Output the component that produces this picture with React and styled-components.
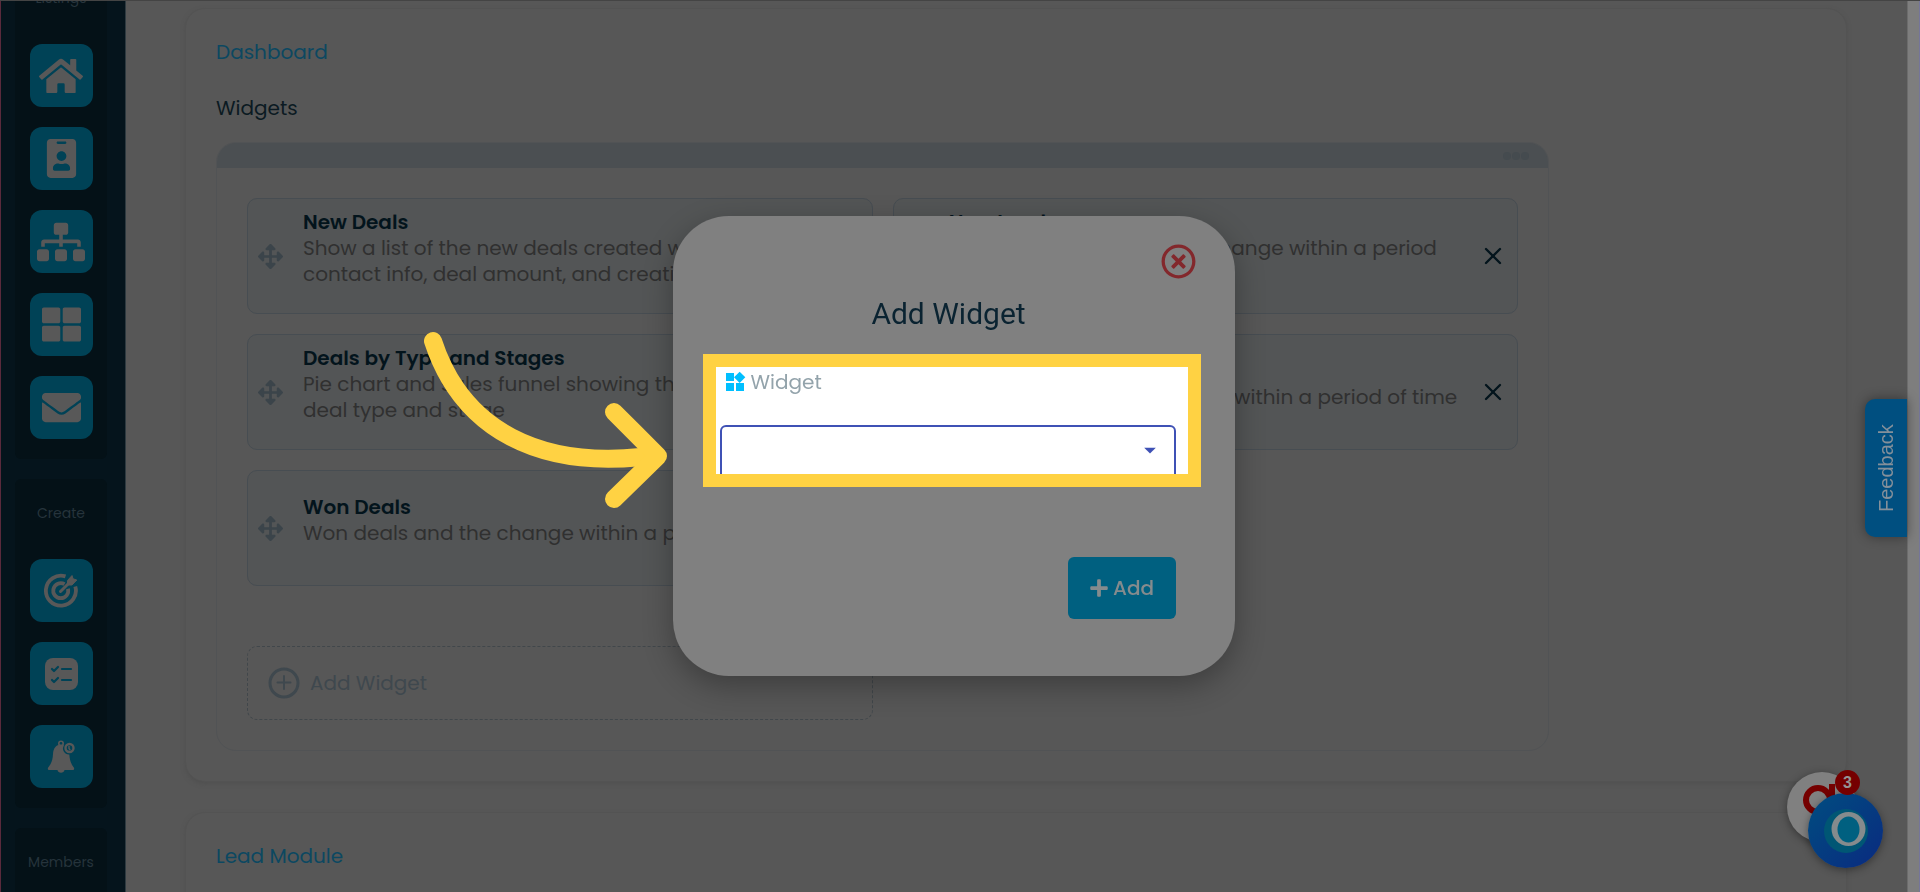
import React, { useState } from 'react'
import styled, { createGlobalStyle } from 'styled-components'
import {
  FaHome,
  FaIdBadge,
  FaSitemap,
  FaThLarge,
  FaEnvelope,
  FaArrowsAlt,
  FaRegTimesCircle,
  FaPlus,
} from 'react-icons/fa'
import { MdWidgets, MdArrowDropDown } from 'react-icons/md'
import { X } from 'lucide-react'

const GlobalStyle = createGlobalStyle`
  * {
    box-sizing: border-box;
  }
  body {
    margin: 0;
    overflow: hidden;
    background: #575757;
    font-family: Poppins, Inter, 'Noto Sans', sans-serif;
    font-size: 20px;
    line-height: 26px;
  }
  button, select {
    font: inherit;
  }
`

const TargetIcon = () => (
  <svg width="36" height="36" viewBox="0 0 36 36" fill="none" stroke="currentColor">
    <path d="M22.5 3.4A15 15 0 1 0 32.3 13.5" strokeWidth="3.8" />
    <path d="M21.5 11.2A7.5 7.5 0 1 0 25 15.8" strokeWidth="3.8" />
    <path d="M17.5 18.5L27 9" strokeWidth="3" strokeLinecap="round" />
    <path
      d="M24.5 7.5L29 2.5L30 5.8L33.8 7L29 12H24.5Z"
      fill="currentColor"
      strokeWidth="1"
      strokeLinejoin="round"
    />
  </svg>
)

const TasksIcon = () => (
  <svg width="34" height="34" viewBox="0 0 34 34" fill="none">
    <rect x="1" y="1" width="33" height="32" rx="8" fill="currentColor" />
    <g stroke="#004256" strokeWidth="2.2" strokeLinecap="round" strokeLinejoin="round">
      <path d="M8 12l2 2 4-4M18 12h9M8 23l2 2 4-4M18 23h9" />
    </g>
  </svg>
)

const ReminderIcon = () => (
  <svg width="28" height="34" viewBox="0 0 28 34" fill="currentColor">
    <circle cx="14" cy="3.5" r="2.2" fill="none" stroke="currentColor" strokeWidth="1.6" />
    <path d="M14 4.5C9 4.5 6.3 8.5 6 14C5.7 20 4.5 23.5 1.2 27.5C.4 28.8 1 30 2.4 30H10.5C11 33.6 17 33.6 17.5 30H25.6C27 30 27.6 28.8 26.8 27.5C24 24 22.8 20 22.3 14.5A6 6 0 0 1 17 5.2Z" />
    <circle cx="22.5" cy="8" r="4" fill="none" stroke="currentColor" strokeWidth="2.4" />
    <path d="M22 6v2.5l1.2 1.5" fill="none" stroke="currentColor" strokeWidth="1.4" />
  </svg>
)

const AddCircleIcon = () => (
  <svg width="32" height="32" viewBox="0 0 32 32" fill="none" stroke="currentColor">
    <circle cx="16" cy="16" r="14" strokeWidth="3" />
    <path d="M16 9v13M9.5 15.5h13" strokeWidth="2" strokeLinecap="round" />
  </svg>
)

const menu = [
  {
    label: 'Listings',
    items: [
      { name: 'Home', icon: <FaHome size={44} /> },
      { name: 'Contacts', icon: <FaIdBadge size={39} /> },
      { name: 'Teams', icon: <FaSitemap size={48} /> },
      { name: 'Boards', icon: <FaThLarge size={39} /> },
      { name: 'Mail', icon: <FaEnvelope size={39} /> },
    ],
  },
  {
    label: 'Create',
    items: [
      { name: 'Goal', icon: <TargetIcon /> },
      { name: 'Task', icon: <TasksIcon /> },
      { name: 'Reminder', icon: <ReminderIcon /> },
    ],
  },
  { label: 'Members', items: [] },
]

const widgets = [
  {
    title: 'New Deals',
    text: 'Show a list of the new deals created with the contact info, deal amount, and creation date',
  },
  {
    title: 'New Leads',
    text: 'Number of Leads and the change within a period of time',
  },
  {
    title: 'Deals by Type and Stages',
    text: 'Pie chart and sales funnel showing the deals by deal type and stage',
  },
  {
    title: 'Open Deals',
    text: 'Open deals and the change within a period of time',
  },
  {
    title: 'Won Deals',
    text: 'Won deals and the change within a period of time',
  },
]

const Sidebar = () => (
  <SideWrapper>
    {menu.map(({ label, items }) => (
      <Group key={label}>
        <GroupLabel>{label}</GroupLabel>
        {items.map(({ name, icon }) => (
          <Tile key={name} aria-label={name}>
            {icon}
          </Tile>
        ))}
      </Group>
    ))}
  </SideWrapper>
)

const Widget = ({ title, text }) => (
  <WidgetCard>
    <MoveIcon />
    <WidgetBody>
      <WidgetTitle>{title}</WidgetTitle>
      <div>{text}</div>
    </WidgetBody>
    <RemoveButton aria-label={`Remove ${title}`}>
      <X size={28} />
    </RemoveButton>
  </WidgetCard>
)

const AddWidgetModal = () => {
  const [widget, setWidget] = useState('')
  return (
    <Backdrop>
      <Modal role="dialog" aria-labelledby="modal-title">
        <CloseButton aria-label="Close">
          <FaRegTimesCircle size={35} />
        </CloseButton>
        <ModalTitle id="modal-title">Add Widget</ModalTitle>
        <Highlight>
          <Label htmlFor="widget">
            <MdWidgets size={24} />
            Widget
          </Label>
          <SelectWrapper>
            <Select id="widget" value={widget} onChange={e => setWidget(e.target.value)}>
              <option value="" />
            </Select>
            <MdArrowDropDown size={28} />
          </SelectWrapper>
        </Highlight>
        <AddButton>
          <FaPlus size={20} />
          Add
        </AddButton>
        <Arrow viewBox="423 331 250 180" aria-hidden="true">
          <path d="M433 341C462 430 540 470 650 456" />
          <path d="M614 412L658 456L614 499" />
        </Arrow>
      </Modal>
    </Backdrop>
  )
}

const Chat = () => (
  <ChatWrapper>
    <Assistant aria-label="Messages">
      <svg width="70" height="70" viewBox="0 0 70 70" fill="none" stroke="#750000">
        <circle cx="31" cy="28" r="12" strokeWidth="6" />
        <path d="M45 12v32" strokeWidth="6" />
      </svg>
    </Assistant>
    <Launcher aria-label="Open chat">
      <svg width="75" height="75" viewBox="0 0 75 75">
        <circle cx="38" cy="38" r="22" fill="#005674" />
        <circle cx="40.5" cy="36" r="17" fill="#858b8d" />
        <ellipse cx="40.5" cy="36.5" rx="11" ry="13" fill="#006080" />
      </svg>
    </Launcher>
    <Badge>3</Badge>
  </ChatWrapper>
)

const App = () => (
  <Page>
    <GlobalStyle />
    <Sidebar />
    <Main>
      <Card>
        <CardTitle>Dashboard</CardTitle>
        <SubTitle>Widgets</SubTitle>
        <Panel>
          <PanelHeader>
            <Dot />
            <Dot />
            <Dot />
          </PanelHeader>
          <Grid>
            {widgets.map(item => (
              <Widget key={item.title} {...item} />
            ))}
          </Grid>
          <Grid>
            <AddWidget>
              <AddCircleIcon />
              Add Widget
            </AddWidget>
          </Grid>
        </Panel>
      </Card>
      <Card>
        <CardTitle>Lead Module</CardTitle>
      </Card>
    </Main>
    <ScrollTrack />
    <Feedback>Feedback</Feedback>
    <AddWidgetModal />
    <Chat />
  </Page>
)

const Page = styled.div`
  display: flex;
  height: 100vh;
  overflow: hidden;
  border-top: 1px solid #444;
`

const SideWrapper = styled.nav`
  flex: 0 0 126px;
  display: flex;
  flex-direction: column;
  align-items: center;
  gap: 20px;
  margin-top: -37px;
  padding-right: 4px;
  background: #05141c;
  border-left: 1px solid #5a2a3c;
  border-right: 1px solid #2e3a40;
`

const Group = styled.div`
  display: flex;
  flex-direction: column;
  align-items: center;
  flex-shrink: 0;
  gap: 20px;
  width: 92px;
  padding: 24px 0 20px;
  background: #041117;
  border-radius: 6px;

  &:last-child {
    flex: 1;
  }
`

const GroupLabel = styled.div`
  margin-bottom: 16px;
  color: #26343c;
  font-size: 14px;
  line-height: 20px;
`

const Tile = styled.button`
  display: flex;
  align-items: center;
  justify-content: center;
  width: 63px;
  height: 63px;
  padding: 0;
  border: 0;
  border-radius: 12px;
  background: #004256;
  color: #585858;
`

const Main = styled.main`
  flex: 1;
  display: flex;
  flex-direction: column;
  gap: 30px;
  min-width: 0;
  padding: 7px 60px 0 59px;
`

const Card = styled.section`
  flex-shrink: 0;
  padding: 30px;
  border: 1px solid #535353;
  border-radius: 20px;
  box-shadow: 0 2px 4px #505050;
  background: #575757;

  &:last-child {
    flex: 1 0 200px;
  }
`

const CardTitle = styled.h2`
  margin: 0;
  color: #0c4861;
  font-size: 20px;
  font-weight: 400;
`

const SubTitle = styled.h3`
  margin: 30px 0 21px;
  color: #0b1a22;
  font-size: 20px;
  font-weight: 400;
`

const Panel = styled.div`
  display: flex;
  flex-direction: column;
  width: 83.33%;
  padding-bottom: 30px;
  border: 1px solid #515355;
  border-radius: 20px;
  overflow: hidden;
`

const PanelHeader = styled.div`
  display: flex;
  justify-content: flex-end;
  align-items: center;
  gap: 1px;
  height: 25px;
  padding-right: 19px;
  background: #4b4f52;
`

const Dot = styled.span`
  width: 8px;
  height: 8px;
  border-radius: 50%;
  background: #454b4f;
`

const Grid = styled.div`
  display: grid;
  grid-template-columns: 1fr 1fr;
  gap: 20px;
  padding: 30px 30px 0;

  & + & {
    padding-top: 60px;
  }
`

const WidgetCard = styled.article`
  display: flex;
  align-items: center;
  height: 116px;
  padding: 0 10px;
  border: 1px solid #474d52;
  border-radius: 10px;
  background: #535556;
`

const MoveIcon = styled(FaArrowsAlt)`
  flex-shrink: 0;
  width: 25px;
  height: 25px;
  color: #3b444a;
`

const WidgetBody = styled.div`
  flex: 1;
  padding: 0 18px 16px 20px;
  color: #303030;
`

const WidgetTitle = styled.div`
  color: #03141c;
  font-weight: 600;
`

const RemoveButton = styled.button`
  display: flex;
  padding: 0;
  border: 0;
  background: none;
  color: #03141c;
`

const AddWidget = styled.button`
  display: flex;
  align-items: center;
  gap: 10px;
  height: 74px;
  padding: 0 20px;
  border: 1px dashed #41474b;
  border-radius: 10px;
  background: none;
  color: #3f484e;
`

const ScrollTrack = styled.div`
  flex: 0 0 13px;
  background: #7e7e7e;
  border-left: 1px solid #6c6c6c;
  border-right: 1px solid #75759a;
`

const Feedback = styled.button`
  position: fixed;
  top: 399px;
  right: 13px;
  width: 42px;
  height: 138px;
  padding: 0;
  border: 0;
  border-radius: 0 10px 10px 0;
  background: #004f80;
  box-shadow: 0 0 12px rgba(0, 0, 0, 0.4);
  color: #84909a;
  font-family: 'Liberation Sans', Arial, sans-serif;
  writing-mode: vertical-rl;
  transform: rotate(180deg);
`

const Backdrop = styled.div`
  position: fixed;
  inset: 0 13px 0 0;
  display: flex;
  align-items: center;
  justify-content: center;
`

const Modal = styled.div`
  position: relative;
  display: flex;
  flex-direction: column;
  width: 562px;
  height: 460px;
  padding: 28px 34px 57px 30px;
  border-radius: 56px;
  background: #808080;
  box-shadow: 0 10px 30px rgba(0, 0, 0, 0.3);
`

const CloseButton = styled.button`
  display: flex;
  align-self: flex-end;
  margin-right: 5px;
  padding: 0;
  border: 0;
  background: none;
  color: #83282c;
`

const ModalTitle = styled.h1`
  margin: 16px 12px 21px 6px;
  color: #0a2331;
  font-family: Roboto, sans-serif;
  font-size: 30px;
  font-weight: 400;
  line-height: 38px;
  text-align: center;
`

const Highlight = styled.div`
  flex: 0 0 133px;
  overflow: hidden;
  padding: 0 12px 0 4px;
  border: 13px solid #ffd243;
  background: #fff;

  svg {
    color: #00bfff;
  }
`

const Label = styled.label`
  display: flex;
  align-items: center;
  gap: 4px;
  margin: 2px 0 30px 3px;
  color: #93a3ab;
`

const SelectWrapper = styled.div`
  display: grid;
  align-items: center;

  & > * {
    grid-area: 1 / 1;
  }
  svg {
    justify-self: end;
    margin: 0 12px 6px 0;
    color: #3f51b5;
    pointer-events: none;
  }
`

const Select = styled.select`
  width: 100%;
  height: 56px;
  border: 2px solid #3f51b5;
  border-radius: 6px;
  background: #fff;
  appearance: none;
`

const AddButton = styled.button`
  display: flex;
  align-items: center;
  justify-content: center;
  gap: 4px;
  align-self: flex-end;
  width: 108px;
  height: 62px;
  margin: auto 25px 0 0;
  border: 0;
  border-radius: 6px;
  background: #006080;
  color: #858b8d;
  font-weight: 500;
`

const Arrow = styled.svg`
  position: absolute;
  top: 115px;
  right: 100%;
  width: 250px;
  height: 180px;
  fill: none;
  stroke: #ffd243;
  stroke-width: 18;
  stroke-linecap: round;
  stroke-linejoin: round;
`

const ChatWrapper = styled.div`
  position: fixed;
  right: 37px;
  bottom: 24px;
  width: 96px;
  height: 98px;
`

const RoundButton = styled.button`
  position: absolute;
  padding: 0;
  border: 0;
  border-radius: 50%;
  box-shadow: 0 2px 8px rgba(0, 0, 0, 0.4);

  svg {
    display: block;
  }
`

const Assistant = styled(RoundButton)`
  top: 2px;
  left: 0;
  background: #808080;
`

const Launcher = styled(RoundButton)`
  right: 0;
  bottom: 0;
  background: linear-gradient(135deg, #004d80, #0a2a80);
`

const Badge = styled.span`
  position: absolute;
  top: 0;
  right: 23px;
  width: 25px;
  height: 25px;
  border-radius: 50%;
  background: #750000;
  color: #959595;
  font: bold 16px/25px 'Liberation Sans', Arial, sans-serif;
  text-align: center;
`

export default App
